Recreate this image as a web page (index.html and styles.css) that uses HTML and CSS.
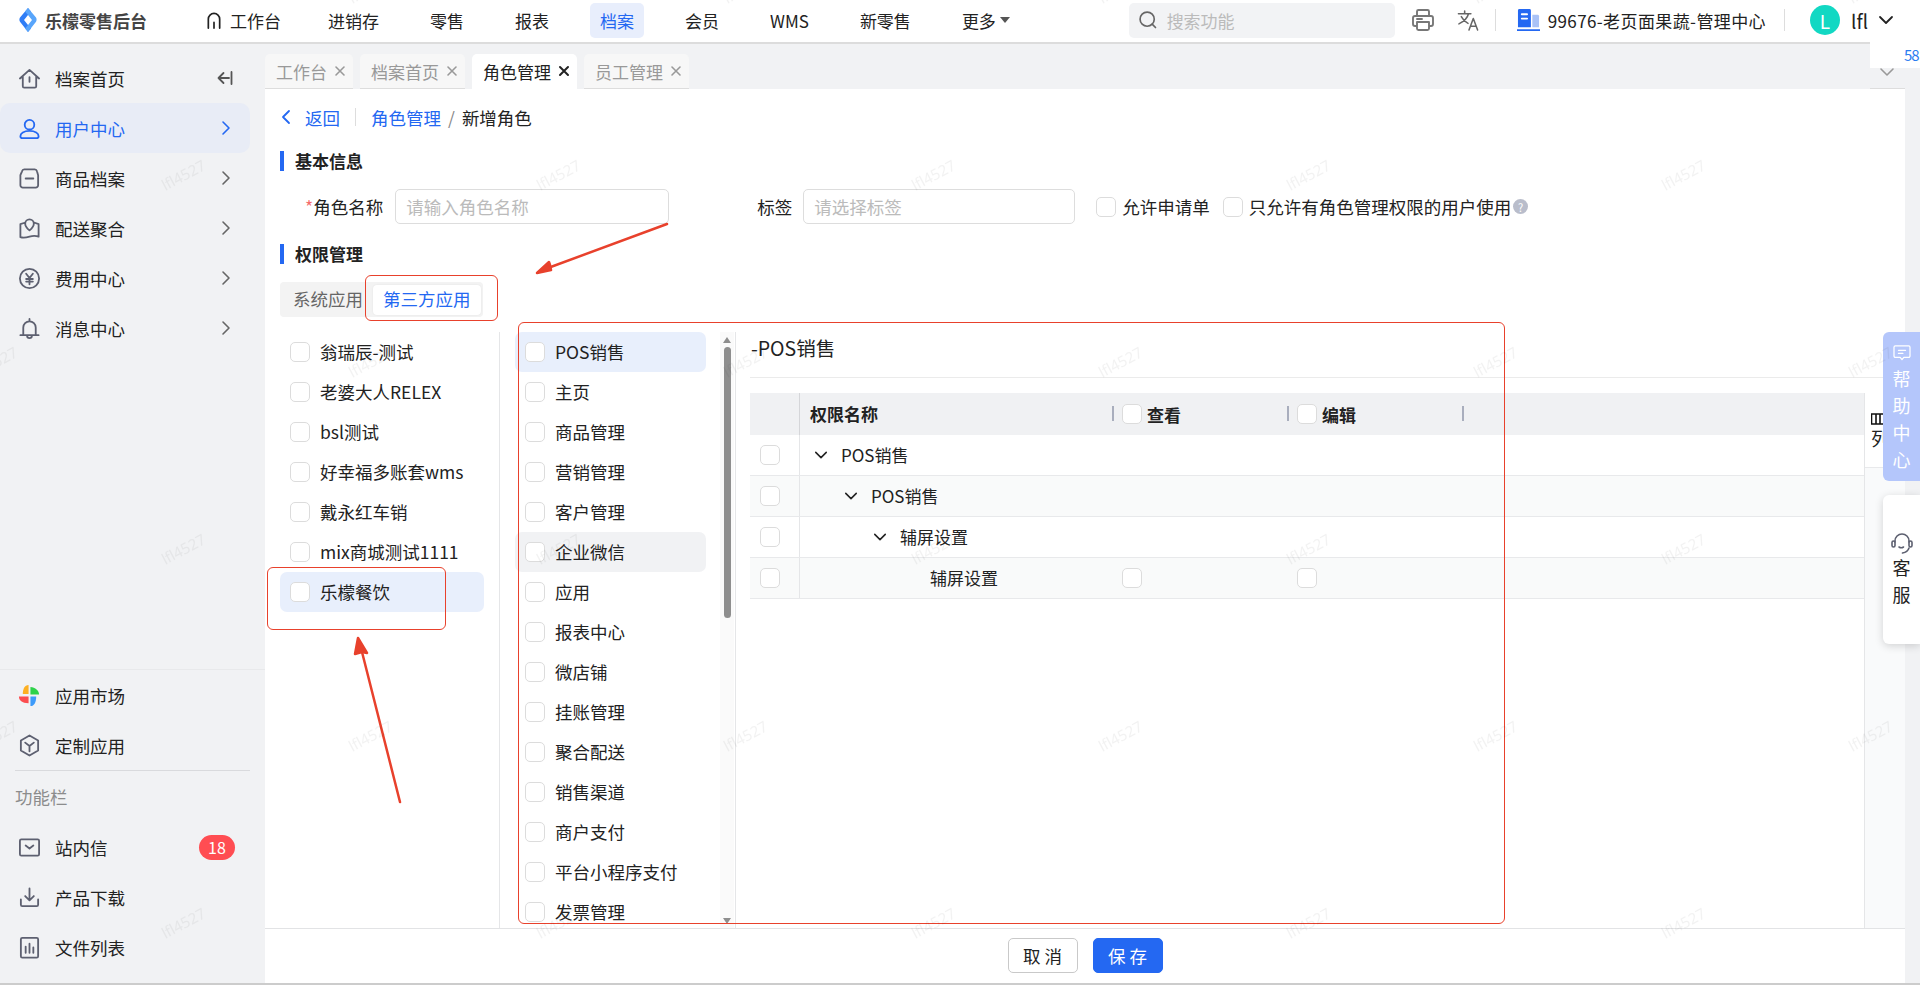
FILE: index.html
```html
<!DOCTYPE html>
<html lang="zh-CN">
<head>
    <meta charset="UTF-8">
    <title>新增角色</title>
    <link rel="stylesheet" href="styles.css">
</head>
<body>
    <svg class="defs" width="0" height="0">
        <symbol id="i-home" viewBox="0 0 24 24"><path d="M2 12L12 3l10 9M5 10v10a1.5 1.5 0 0 0 1.5 1.5h11A1.5 1.5 0 0 0 19 20V10M12 10.5v5"/></symbol>
        <symbol id="i-user" viewBox="0 0 24 24"><circle cx="12" cy="8" r="5"/><path d="M12 14.5c-6 0-9.500 2.500-9.500 5.500 0 1.300 1 2 2 2h15c1 0 2-.7 2-2 0-3-3.500-5.500-9.500-5.500z"/></symbol>
        <symbol id="i-box" viewBox="0 0 24 24"><path d="M6.500 2.500h11c1.200 0 2 .8 2.300 2l1.200 4V19a2.500 2.500 0 0 1-2.500 2.500H5A2.500 2.500 0 0 1 2.500 19V8.500l1.700-4c.3-1.200 1.100-2 2.300-2zM8 12h8"/></symbol>
        <symbol id="i-map" viewBox="0 0 24 24"><path d="M7 6L2.500 7.500V21c3 1 6 .5 9.500-.5s6.500-1 9.500 0V7.500L17.500 6M12 14c-3-2.500-4.500-4.500-4.500-7a4.500 4.500 0 0 1 9 0c0 2.500-1.500 4.500-4.500 7z"/></symbol>
        <symbol id="i-yen" viewBox="0 0 24 24"><circle cx="12" cy="12" r="10"/><path d="M8.500 7l3.500 4.500L15.500 7M12 11.500V18M8.500 12.500h7M8.500 15.200h7"/></symbol>
        <symbol id="i-bell" viewBox="0 0 24 24"><path d="M5.500 19v-8a6.500 6.500 0 0 1 13 0v8M2.500 19h19M12 2v2.500M9.500 19.500a2.500 2.500 0 0 0 5 0"/></symbol>
        <symbol id="i-right" viewBox="0 0 12 16"><path d="M3 2l6 6-6 6"/></symbol>
        <symbol id="i-down" viewBox="0 0 16 12"><path d="M2 3l6 6 6-6"/></symbol>
        <symbol id="i-close" viewBox="0 0 12 12"><path d="M2 2l8 8M10 2l-8 8"/></symbol>
        <symbol id="i-cube" viewBox="0 0 24 24"><path d="M12 1.500l9 5.200v10.600l-9 5.200-9-5.200V6.700zM7.500 9l4.500 3.500L16.500 9M12 12.500V18"/></symbol>
        <symbol id="i-mail" viewBox="0 0 24 24"><rect x="2" y="3.500" width="20" height="17" rx="1.500"/><path d="M8 10l4 3 4-3"/></symbol>
        <symbol id="i-down-load" viewBox="0 0 24 24"><path d="M12 2.500v12M7.500 10.500l4.500 4.500 4.500-4.500M3 14v5.500a1.500 1.500 0 0 0 1.500 1.500h15a1.500 1.500 0 0 0 1.500-1.500V14"/></symbol>
        <symbol id="i-chart" viewBox="0 0 24 24"><rect x="3" y="2" width="18" height="20.500" rx="1.500"/><path d="M8 11v6.500M12 8v9.500M16 12v5.500"/></symbol>
        <symbol id="i-check" viewBox="0 0 24 24"><circle cx="11" cy="11" r="8.500"/><path d="M17 17l4 4"/></symbol>
    </svg>

    <div class="app">
        <header class="topbar">
            <div class="logo">
                <svg class="logo-mark" viewBox="0 0 18 24"><path d="M9 0l3 3.500-3 3.500-4 5 4 5 3 3.500L9 24 1 13.700c-.8-1.200-.8-3 0-4.200z" fill="#2f7df6"/><path d="M9 0l8 9.500c.8 1.200.8 3 0 4.200L9 24l-3-3.500 3-3.500 4-5-4-5-3-3.500z" fill="#58a5fb"/></svg>
                <span>乐檬零售后台</span>
            </div>
            <nav class="topnav">
                <a class="topnav-item first"><svg class="nav-home" viewBox="0 0 16 18"><path d="M2 17V7.500a6 6 0 0 1 12 0V17M8 11v6"/></svg>工作台</a>
                <a class="topnav-item">进销存</a>
                <a class="topnav-item">零售</a>
                <a class="topnav-item">报表</a>
                <a class="topnav-item active">档案</a>
                <a class="topnav-item">会员</a>
                <a class="topnav-item">WMS</a>
                <a class="topnav-item">新零售</a>
                <a class="topnav-item">更多<i class="caret"></i></a>
            </nav>
            <div class="topbar-right">
                <div class="search">
                    <svg class="search-icon"><use href="#i-check"/></svg>
                    <span>搜索功能</span>
                </div>
                <svg class="print" viewBox="0 0 24 24"><path d="M6 8V3.500A1.500 1.500 0 0 1 7.500 2h9A1.500 1.500 0 0 1 18 3.500V8M6 18H4a2 2 0 0 1-2-2v-6a2 2 0 0 1 2-2h16a2 2 0 0 1 2 2v6a2 2 0 0 1-2 2h-2M6 14h12v6.500a1.500 1.500 0 0 1-1.500 1.500h-9A1.500 1.500 0 0 1 6 20.500zM6 11h5"/></svg>
                <svg class="translate" viewBox="0 0 24 24"><path d="M1.500 5h13M8 2v3M12 5c-1 4-4.500 8-10 10.500M4.500 8c1.500 3 4 5.500 7 7M12.500 22l4.500-12 4.500 12M14.300 18h5.400"/></svg>
                <i class="top-sep"></i>
                <svg class="store" viewBox="0 0 24 24"><path d="M1 1.500A1.500 1.500 0 0 1 2.500 0H13a1.500 1.500 0 0 1 1.500 1.500V19H1z" fill="#2468f2"/><path d="M16 6h5.500A1.500 1.500 0 0 1 23 7.500V19h-7z" fill="#a9c2f7"/><path d="M5 5.500h5.500M5 10h5.500" stroke="#fff" stroke-width="2"/><path d="M0 22h24" stroke="#2468f2" stroke-width="2"/></svg>
                <span class="org">99676-老页面果蔬-管理中心</span>
                <i class="top-sep"></i>
                <span class="avatar">L</span>
                <span class="username">lfl</span>
                <svg class="user-down"><use href="#i-down"/></svg>
            </div>
        </header>

        <div class="body">
            <aside class="sidebar">
                <div class="side-group">
                    <a class="side-item"><svg class="side-icon"><use href="#i-home"/></svg>档案首页<svg class="side-collapse" viewBox="0 0 16 16"><path d="M14.500 2v12M12 8H1.500M6.500 3l-5 5 5 5"/></svg></a>
                    <a class="side-item active"><svg class="side-icon"><use href="#i-user"/></svg>用户中心<svg class="side-arrow"><use href="#i-right"/></svg></a>
                    <a class="side-item"><svg class="side-icon"><use href="#i-box"/></svg>商品档案<svg class="side-arrow"><use href="#i-right"/></svg></a>
                    <a class="side-item"><svg class="side-icon"><use href="#i-map"/></svg>配送聚合<svg class="side-arrow"><use href="#i-right"/></svg></a>
                    <a class="side-item"><svg class="side-icon"><use href="#i-yen"/></svg>费用中心<svg class="side-arrow"><use href="#i-right"/></svg></a>
                    <a class="side-item"><svg class="side-icon"><use href="#i-bell"/></svg>消息中心<svg class="side-arrow"><use href="#i-right"/></svg></a>
                </div>
                <div class="side-bottom">
                    <a class="side-item"><svg class="side-icon market" viewBox="0 0 24 24"><path d="M11 1C7 1 5 5 5 10.500h6z" fill="#fdb022"/><path d="M13 3v8h9c0-4-4-8-9-8z" fill="#2ed24a"/><path d="M1 13c0 4 3 7 10 7v-7z" fill="#fb4d4f"/><path d="M13 13v10c4 0 6-4 6-10z" fill="#3d9bfa"/></svg>应用市场</a>
                    <a class="side-item"><svg class="side-icon"><use href="#i-cube"/></svg>定制应用</a>
                    <div class="side-label">功能栏</div>
                    <a class="side-item"><svg class="side-icon"><use href="#i-mail"/></svg>站内信<span class="badge">18</span></a>
                    <a class="side-item"><svg class="side-icon"><use href="#i-down-load"/></svg>产品下载</a>
                    <a class="side-item"><svg class="side-icon"><use href="#i-chart"/></svg>文件列表</a>
                </div>
            </aside>

            <main class="main">
                <div class="tabs">
                    <div class="tab">工作台<svg class="tab-close"><use href="#i-close"/></svg></div>
                    <div class="tab">档案首页<svg class="tab-close"><use href="#i-close"/></svg></div>
                    <div class="tab active">角色管理<svg class="tab-close"><use href="#i-close"/></svg></div>
                    <div class="tab">员工管理<svg class="tab-close"><use href="#i-close"/></svg></div>
                    <div class="tabs-more"><svg><use href="#i-down"/></svg></div>
                </div>

                <div class="content">
                    <div class="crumbs">
                        <svg class="back-arrow" viewBox="0 0 12 16"><path d="M9 2L3 8l6 6"/></svg>
                        <a class="link">返回</a>
                        <i class="crumb-sep"></i>
                        <a class="link">角色管理</a>
                        <span class="slash">/</span>
                        <span>新增角色</span>
                    </div>

                    <h2 class="block-title">基本信息</h2>
                    <div class="form-row">
                        <label class="form-label name-label"><em>*</em>角色名称</label>
                        <div class="input input-name">请输入角色名称</div>
                        <label class="form-label tag-label">标签</label>
                        <div class="input input-tag">请选择标签</div>
                        <label class="check-label first"><i class="cb"></i>允许申请单</label>
                        <label class="check-label"><i class="cb"></i>只允许有角色管理权限的用户使用</label>
                        <span class="help-dot">?</span>
                    </div>

                    <h2 class="block-title second">权限管理</h2>
                    <div class="segment">
                        <span class="segment-item">系统应用</span>
                        <span class="segment-item active">第三方应用</span>
                    </div>

                    <div class="perm">
                        <div class="col-apps">
                            <div class="row"><i class="cb"></i>翁瑞辰-测试</div>
                            <div class="row"><i class="cb"></i>老婆大人RELEX</div>
                            <div class="row"><i class="cb"></i>bsl测试</div>
                            <div class="row"><i class="cb"></i>好幸福多账套wms</div>
                            <div class="row"><i class="cb"></i>戴永红车销</div>
                            <div class="row"><i class="cb"></i>mix商城测试1111</div>
                            <div class="row selected"><i class="cb"></i>乐檬餐饮</div>
                        </div>

                        <div class="col-menus">
                            <div class="menu-list">
                                <div class="row selected"><i class="cb"></i>POS销售</div>
                                <div class="row"><i class="cb"></i>主页</div>
                                <div class="row"><i class="cb"></i>商品管理</div>
                                <div class="row"><i class="cb"></i>营销管理</div>
                                <div class="row"><i class="cb"></i>客户管理</div>
                                <div class="row hovered"><i class="cb"></i>企业微信</div>
                                <div class="row"><i class="cb"></i>应用</div>
                                <div class="row"><i class="cb"></i>报表中心</div>
                                <div class="row"><i class="cb"></i>微店铺</div>
                                <div class="row"><i class="cb"></i>挂账管理</div>
                                <div class="row"><i class="cb"></i>聚合配送</div>
                                <div class="row"><i class="cb"></i>销售渠道</div>
                                <div class="row"><i class="cb"></i>商户支付</div>
                                <div class="row"><i class="cb"></i>平台小程序支付</div>
                                <div class="row"><i class="cb"></i>发票管理</div>
                            </div>
                            <div class="scrollbar">
                                <i class="scroll-up"></i>
                                <i class="scroll-thumb"></i>
                                <i class="scroll-down"></i>
                            </div>
                        </div>

                        <div class="col-detail">
                            <div class="detail-title">-POS销售</div>
                            <div class="detail-body">
                                <div class="table">
                                    <div class="tr th">
                                        <div class="td td-check"></div>
                                        <div class="td td-name">权限名称</div>
                                        <div class="td td-op"><i class="cb"></i>查看</div>
                                        <div class="td td-op"><i class="cb"></i>编辑</div>
                                        <div class="td td-op"></div>
                                    </div>
                                    <div class="tr">
                                        <div class="td td-check"><i class="cb"></i></div>
                                        <div class="td td-name"><svg class="tree-arrow"><use href="#i-down"/></svg>POS销售</div>
                                    </div>
                                    <div class="tr even">
                                        <div class="td td-check"><i class="cb"></i></div>
                                        <div class="td td-name level-1"><svg class="tree-arrow"><use href="#i-down"/></svg>POS销售</div>
                                    </div>
                                    <div class="tr">
                                        <div class="td td-check"><i class="cb"></i></div>
                                        <div class="td td-name level-2"><svg class="tree-arrow"><use href="#i-down"/></svg>辅屏设置</div>
                                    </div>
                                    <div class="tr even">
                                        <div class="td td-check"><i class="cb"></i></div>
                                        <div class="td td-name level-3">辅屏设置</div>
                                        <div class="td td-op"><i class="cb"></i></div>
                                        <div class="td td-op"><i class="cb"></i></div>
                                    </div>
                                </div>
                                <div class="col-setting">
                                    <div class="col-setting-head">
                                        <svg class="col-icon" viewBox="0 0 14 12"><path d="M0.500 1h13v10h-13zM5 1v10M9 1v10"/></svg>
                                        <span>列</span>
                                    </div>
                                </div>
                            </div>
                        </div>
                    </div>
                </div>

                <footer class="actions">
                    <button class="btn">取 消</button>
                    <button class="btn primary">保 存</button>
                </footer>
            </main>
        </div>
    </div>

    <!-- floating bits -->
    <div class="float-count">58</div>
    <div class="float-help">
        <svg class="float-icon" viewBox="0 0 20 18"><path d="M2.500 1h15A1.500 1.500 0 0 1 19 2.500v10a1.500 1.500 0 0 1-1.500 1.500H12l-2 2.500L8 14H2.500A1.500 1.500 0 0 1 1 12.500v-10A1.500 1.500 0 0 1 2.500 1zM6 6h8M6 9.500h5"/></svg>
        <span>帮</span><span>助</span><span>中</span><span>心</span>
    </div>
    <div class="float-service">
        <svg class="service-icon" viewBox="0 0 22 22"><path d="M4 10V9a7 7 0 0 1 14 0v1M18 16c-1 3-3.500 4.500-6.500 5M8 15c1.500 1 3 1 4.500 0"/><rect x="1" y="9" width="3" height="6" rx="1.500"/><rect x="18" y="9" width="3" height="6" rx="1.500"/></svg>
        <span>客</span><span>服</span>
    </div>

    <!-- red notes drawn on the screenshot -->
    <div class="note note-tab"></div>
    <div class="note note-app"></div>
    <div class="note note-menu"></div>
    <svg class="note-arrows" viewBox="0 0 1920 985">
        <path d="M667 224L548 268M400 802L362 652"/>
        <path class="head" d="M537 273l12-11 1 3 1 5zM358 638l9 15-5-1-7 2z"/>
    </svg>

    <svg class="watermark" width="1920" height="985">
        <defs>
            <pattern id="wm" width="375" height="374" patternUnits="userSpaceOnUse" patternTransform="translate(92 86)">
                <text x="94" y="94" transform="rotate(-28 94 94)" text-anchor="middle">lfl4527</text>
                <text x="281" y="281" transform="rotate(-28 281 281)" text-anchor="middle">lfl4527</text>
            </pattern>
        </defs>
        <rect width="1920" height="985" fill="url(#wm)"/>
    </svg>
</body>
</html>
```
FILE: styles.css
```css
* {
    margin: 0;
    padding: 0;
    box-sizing: border-box;
}

html, body {
    height: 985px;
    overflow: hidden;
}

body {
    position: relative;
    font-family: "Noto Sans CJK SC", "Noto Sans", sans-serif;
    font-size: 17.5px;
    color: #222;
    background: #fff;
}

i, em {
    font-style: normal;
}

svg {
    fill: none;
    stroke: currentColor;
    stroke-width: 1.6;
    stroke-linecap: round;
    stroke-linejoin: round;
    flex: none;
}

.defs {
    position: absolute;
}

.app {
    height: 985px;
    display: flex;
    flex-direction: column;
    border-bottom: 2px solid #ccc;
}

/* top bar */
.topbar {
    height: 44px;
    flex: none;
    display: flex;
    align-items: center;
    border-bottom: 2px solid #dcdcdc;
    padding-bottom: 2px;
    font-size: 17px;
}

.logo {
    width: 196px;
    flex: none;
    display: flex;
    align-items: center;
    padding-left: 19px;
    font-weight: 700;
    color: #444;
}

.logo-mark {
    width: 18px;
    height: 24px;
    margin-right: 8px;
    stroke: none;
}

.topnav {
    display: flex;
    align-items: center;
    gap: 31px;
}

.topnav-item {
    height: 35px;
    padding: 0 10px;
    display: flex;
    align-items: center;
    border-radius: 5px;
    white-space: nowrap;
}

.topnav-item.first {
    padding-right: 6px;
}

.topnav-item.active {
    background: #e8eefc;
    color: #2468f2;
}

.nav-home {
    width: 16px;
    height: 17px;
    margin-right: 8px;
    stroke-width: 1.8;
}

.caret {
    width: 0;
    height: 0;
    margin-left: 4px;
    border-left: 5px solid transparent;
    border-right: 5px solid transparent;
    border-top: 6px solid #555;
}

.topbar-right {
    margin-left: auto;
    display: flex;
    align-items: center;
}

.search {
    width: 266px;
    height: 35px;
    display: flex;
    align-items: center;
    padding-left: 9px;
    gap: 9px;
    background: #f2f3f5;
    border-radius: 5px;
    color: #bbb;
}

.search-icon {
    width: 20px;
    height: 20px;
    color: #666;
    stroke-width: 2;
}

.print {
    width: 24px;
    height: 24px;
    margin-left: 16px;
    color: #777;
    stroke-width: 1.9;
}

.translate {
    width: 23px;
    height: 23px;
    margin-left: 22px;
    color: #666;
}

.top-sep {
    width: 1px;
    height: 22px;
    margin: 0 21px 0 15px;
    background: #ddd;
}

.store {
    width: 23px;
    height: 23px;
    stroke: none;
    margin-right: 8px;
}

.org {
    margin-right: 3px;
    color: #222;
    white-space: nowrap;
    letter-spacing: 0.4px;
}

.avatar {
    width: 30px;
    height: 30px;
    margin-left: 4px;
    border-radius: 50%;
    background: #12d8c3;
    color: #fff;
    font-size: 19px;
    display: flex;
    align-items: center;
    justify-content: center;
}

.username {
    margin-left: 11px;
    font-size: 19px;
}

.user-down {
    width: 16px;
    height: 12px;
    margin: 0 26px 0 10px;
    stroke-width: 1.8;
}

/* layout */
.body {
    flex: 1;
    min-height: 0;
    display: flex;
    background: #f1f2f4;
}

.sidebar {
    width: 265px;
    flex: none;
    display: flex;
    flex-direction: column;
    justify-content: space-between;
}

.side-group {
    padding-top: 9px;
}

.side-bottom {
    border-top: 1px solid #e8e9eb;
    padding-bottom: 11px;
}

.side-item {
    position: relative;
    height: 50px;
    width: 250px;
    padding-left: 18px;
    display: flex;
    align-items: center;
    border-radius: 10px;
}

.side-item.active {
    background: #e8ecf6;
    color: #2468f2;
}

.side-icon {
    width: 23px;
    height: 23px;
    margin-right: 14px;
    color: #5d6070;
    stroke-width: 1.9;
}

.active .side-icon {
    color: #2468f2;
}

.market {
    stroke: none;
}

.side-arrow {
    width: 12px;
    height: 16px;
    margin-left: auto;
    margin-right: 18px;
    color: #666;
}

.active .side-arrow {
    color: #2468f2;
}

.side-collapse {
    width: 16px;
    height: 16px;
    margin-left: auto;
    margin-right: 17px;
    color: #555;
    stroke-width: 1.8;
}

.side-label {
    margin: 0 0 0 15px;
    height: 52px;
    width: 235px;
    border-top: 1px solid #d9dadd;
    display: flex;
    align-items: center;
    color: #8c8c8c;
}

.badge {
    margin-left: auto;
    margin-right: 15px;
    width: 36px;
    height: 25px;
    border-radius: 13px;
    background: #ff4d52;
    color: #fff;
    font-size: 16px;
    display: flex;
    align-items: center;
    justify-content: center;
}

.main {
    flex: 1;
    min-width: 0;
    margin-right: 15px;
    display: flex;
    flex-direction: column;
}

/* tabs */
.tabs {
    height: 45px;
    flex: none;
    padding-top: 10px;
    display: flex;
    gap: 7px;
    font-size: 17px;
}

.tab {
    height: 35px;
    padding: 0 7px 0 11px;
    display: flex;
    align-items: center;
    gap: 7px;
    background: #f7f7f7;
    border-bottom: 1px solid #ddd;
    border-radius: 5px 5px 0 0;
    color: #999;
}

.tab.active {
    background: #fff;
    border-bottom-color: #fff;
    color: #222;
}

.tab-close {
    width: 12px;
    height: 12px;
}

.tab.active .tab-close {
    stroke-width: 2;
}

.tabs-more {
    width: 35px;
    height: 35px;
    margin-left: auto;
    border-bottom: 1px solid #ddd;
    padding: 12px 0 0 9px;
    color: #999;
}

.tabs-more svg {
    width: 16px;
    height: 12px;
    display: block;
}

/* content */
.content {
    flex: 1;
    min-height: 0;
    background: #fff;
    padding: 14px 0 0 15px;
    display: flex;
    flex-direction: column;
}

.crumbs {
    height: 30px;
    padding-bottom: 2px;
    display: flex;
    align-items: center;
    flex: none;
}

.back-arrow {
    width: 12px;
    height: 16px;
    margin: 0 13px 0 0;
    color: #2468f2;
    stroke-width: 1.8;
}

.link {
    color: #2468f2;
}

.crumb-sep {
    width: 1px;
    height: 18px;
    margin: 0 15px;
    background: #ddd;
}

.slash {
    margin: 0 7px;
    color: #888;
}

.block-title {
    height: 20px;
    margin-top: 18px;
    padding: 0 0 2px 11px;
    flex: none;
    display: flex;
    align-items: center;
    border-left: 4px solid #2468f2;
    font-size: 17px;
    font-weight: 700;
}

.block-title.second {
    margin-top: 20px;
}

.form-row {
    height: 35px;
    margin-top: 18px;
    flex: none;
    display: flex;
    align-items: center;
}

.form-label {
    margin-left: 25px;
    margin-right: 10px;
    white-space: nowrap;
}

.name-label {
    margin-right: 12px;
}

.form-label em {
    color: #f56c6c;
}

.tag-label {
    margin-left: 88px;
    margin-right: 11px;
}

.input {
    height: 35px;
    padding-left: 10px;
    display: flex;
    align-items: center;
    border: 1px solid #ddd;
    border-radius: 5px;
    color: #bbb;
}

.input-name {
    width: 274px;
}

.input-tag {
    width: 272px;
}

.check-label {
    display: flex;
    align-items: center;
    gap: 6px;
    margin-left: 13px;
    white-space: nowrap;
}

.check-label.first {
    margin-left: 21px;
}

.help-dot {
    width: 15px;
    height: 15px;
    margin-left: 2px;
    border-radius: 50%;
    background: #b9bdcb;
    color: #fff;
    font-size: 11px;
    display: flex;
    align-items: center;
    justify-content: center;
}

.cb {
    width: 20px;
    height: 20px;
    flex: none;
    background: #fff;
    border: 1px solid #dcdcdc;
    border-radius: 5px;
    display: block;
}

.segment {
    width: 203px;
    height: 35px;
    margin-top: 18px;
    flex: none;
    display: flex;
    align-items: center;
    padding: 0 3px 0 13px;
    gap: 10px;
    background: #f3f3f3;
    border-radius: 4px;
}

.segment-item {
    padding-bottom: 2px;
    color: #666;
    white-space: nowrap;
}

.segment-item.active {
    height: 30px;
    padding: 0 10px 2px;
    display: flex;
    align-items: center;
    background: #fff;
    border-radius: 4px;
    color: #2468f2;
    box-shadow: 0 0 2px rgba(0,0,0,0.08);
}

/* three columns */
.perm {
    flex: 1;
    min-height: 0;
    margin-top: 15px;
    display: flex;
}

.row {
    height: 40px;
    padding: 0 0 2px 10px;
    display: flex;
    align-items: center;
    gap: 10px;
    border-radius: 7px;
    white-space: nowrap;
}

.row .cb {
    margin-top: 2px;
}

.row.selected {
    background: #e8effc;
}

.row.hovered {
    background: #f1f2f4;
}

.col-apps {
    width: 220px;
    flex: none;
    padding-right: 15px;
    border-right: 1px solid #e5e6e8;
}

.col-menus {
    width: 236px;
    flex: none;
    display: flex;
    padding-left: 15px;
    border-right: 1px solid #e5e6e8;
    overflow: hidden;
}

.menu-list {
    width: 191px;
    flex: none;
}

.scrollbar {
    width: 14px;
    margin-left: 14px;
    background: #fafafa;
    display: flex;
    flex-direction: column;
    align-items: center;
}

.scroll-up, .scroll-down {
    width: 0;
    height: 0;
    border-left: 4px solid transparent;
    border-right: 4px solid transparent;
}

.scroll-up {
    margin-top: 5px;
    border-bottom: 6px solid #8e8e8e;
}

.scroll-thumb {
    width: 7px;
    height: 271px;
    margin-top: 4px;
    border-radius: 4px;
    background: #8e8e8e;
}

.scroll-down {
    margin-top: auto;
    margin-bottom: 4px;
    border-top: 6px solid #8e8e8e;
}

.col-detail {
    flex: 1;
    min-width: 0;
    padding-left: 14px;
    display: flex;
    flex-direction: column;
}

.detail-title {
    height: 46px;
    flex: none;
    padding: 0 0 15px 1px;
    display: flex;
    align-items: center;
    font-size: 19.5px;
    border-bottom: 1px solid #ebebeb;
}

.detail-body {
    flex: 1;
    min-height: 0;
    margin-top: 15px;
    display: flex;
}

.table {
    width: 1114px;
    flex: none;
    font-size: 17px;
}

.tr {
    height: 41px;
    display: flex;
    border-bottom: 1px solid #e8e9eb;
}

.tr.th {
    height: 42px;
    background: #f0f1f3;
    border-bottom: 0;
    font-weight: 700;
}

.tr.even {
    background: #f9fafa;
}

.td {
    display: flex;
    align-items: center;
}

.td-check {
    width: 50px;
    padding-left: 10px;
    border-right: 1px solid #e5e6e8;
}

.th .td-check {
    border-right-color: #d5d6d9;
}

.td-name {
    width: 312px;
    padding-left: 14px;
    padding-bottom: 2px;
}

.th .td-name {
    padding-left: 10px;
}

.td-op {
    width: 175px;
    padding-left: 10px;
    gap: 5px;
    position: relative;
}

.th .td-op::before {
    content: "";
    position: absolute;
    left: 0;
    top: 13px;
    width: 2px;
    height: 15px;
    background: #a9aebd;
}

.th .td-op + .td-op + .td-op {
    width: 10px;
}

.tree-arrow {
    width: 14px;
    height: 12px;
    margin: 2px 13px 0 0;
    stroke-width: 1.8;
}

.level-1 {
    padding-left: 44px;
}

.level-2 {
    padding-left: 73px;
}

.level-3 {
    padding-left: 130px;
}

.col-setting {
    flex: 1;
    border-left: 1px solid #e5e6e8;
    background: #f9fafb;
}

.col-setting-head {
    height: 75px;
    padding: 20px 0 0 6px;
    background: #fff;
    border-bottom: 1px solid #e8e9eb;
    overflow: hidden;
}

.col-icon {
    width: 14px;
    height: 12px;
    display: block;
    color: #111;
}

.col-setting-head span {
    display: block;
    margin-top: 1px;
    line-height: 24px;
    font-size: 19px;
}

.actions {
    height: 55px;
    flex: none;
    background: #fff;
    border-top: 1px solid #e2e3e5;
    display: flex;
    align-items: center;
    justify-content: center;
    gap: 15px;
    padding-bottom: 1px;
}

.btn {
    width: 70px;
    height: 35px;
    font: inherit;
    color: #222;
    background: #fff;
    border: 1px solid #c9c9c9;
    border-radius: 5px;
}

.btn.primary {
    background: #2468f2;
    border-color: #2468f2;
    color: #fff;
}

/* floating */
.float-count {
    position: absolute;
    left: 1870px;
    top: 41px;
    width: 50px;
    height: 27px;
    padding-left: 34px;
    background: #fff;
    color: #2b7cf0;
    font-size: 15px;
    letter-spacing: -1px;
    line-height: 27px;
    white-space: nowrap;
}

.float-help, .float-service {
    position: absolute;
    left: 1883px;
    width: 37px;
    height: 149px;
    border-radius: 6px 0 0 6px;
    display: flex;
    flex-direction: column;
    align-items: center;
    font-size: 18px;
    line-height: 27px;
}

.float-help {
    top: 332px;
    padding-top: 13px;
    background: #b4c6fb;
    color: #fff;
}

.float-icon {
    width: 18px;
    height: 16px;
    margin-bottom: 4px;
    stroke-width: 1.4;
}

.float-service {
    top: 495px;
    padding-top: 37px;
    background: #fff;
    color: #222;
    box-shadow: 0 2px 8px rgba(0,0,0,0.16);
}

.service-icon {
    width: 22px;
    height: 22px;
    color: #5d6070;
}

.note {
    position: absolute;
    border: 1px solid #e8412c;
    border-radius: 6px;
    pointer-events: none;
}

.note-tab {
    left: 365px;
    top: 275px;
    width: 133px;
    height: 46px;
}

.note-app {
    left: 267px;
    top: 567px;
    width: 179px;
    height: 63px;
}

.note-menu {
    left: 518px;
    top: 322px;
    width: 987px;
    height: 602px;
}

.note-arrows {
    position: absolute;
    left: 0;
    top: 0;
    width: 1920px;
    height: 985px;
    color: #e8412c;
    stroke-width: 2.5;
    pointer-events: none;
}

.note-arrows .head {
    fill: #e8412c;
}

.watermark {
    position: absolute;
    left: 0;
    top: 0;
    pointer-events: none;
    stroke: none;
}

.watermark text {
    fill: rgba(0,0,0,0.05);
    stroke: none;
    font-family: "Noto Sans", sans-serif;
    font-size: 15px;
}
```
